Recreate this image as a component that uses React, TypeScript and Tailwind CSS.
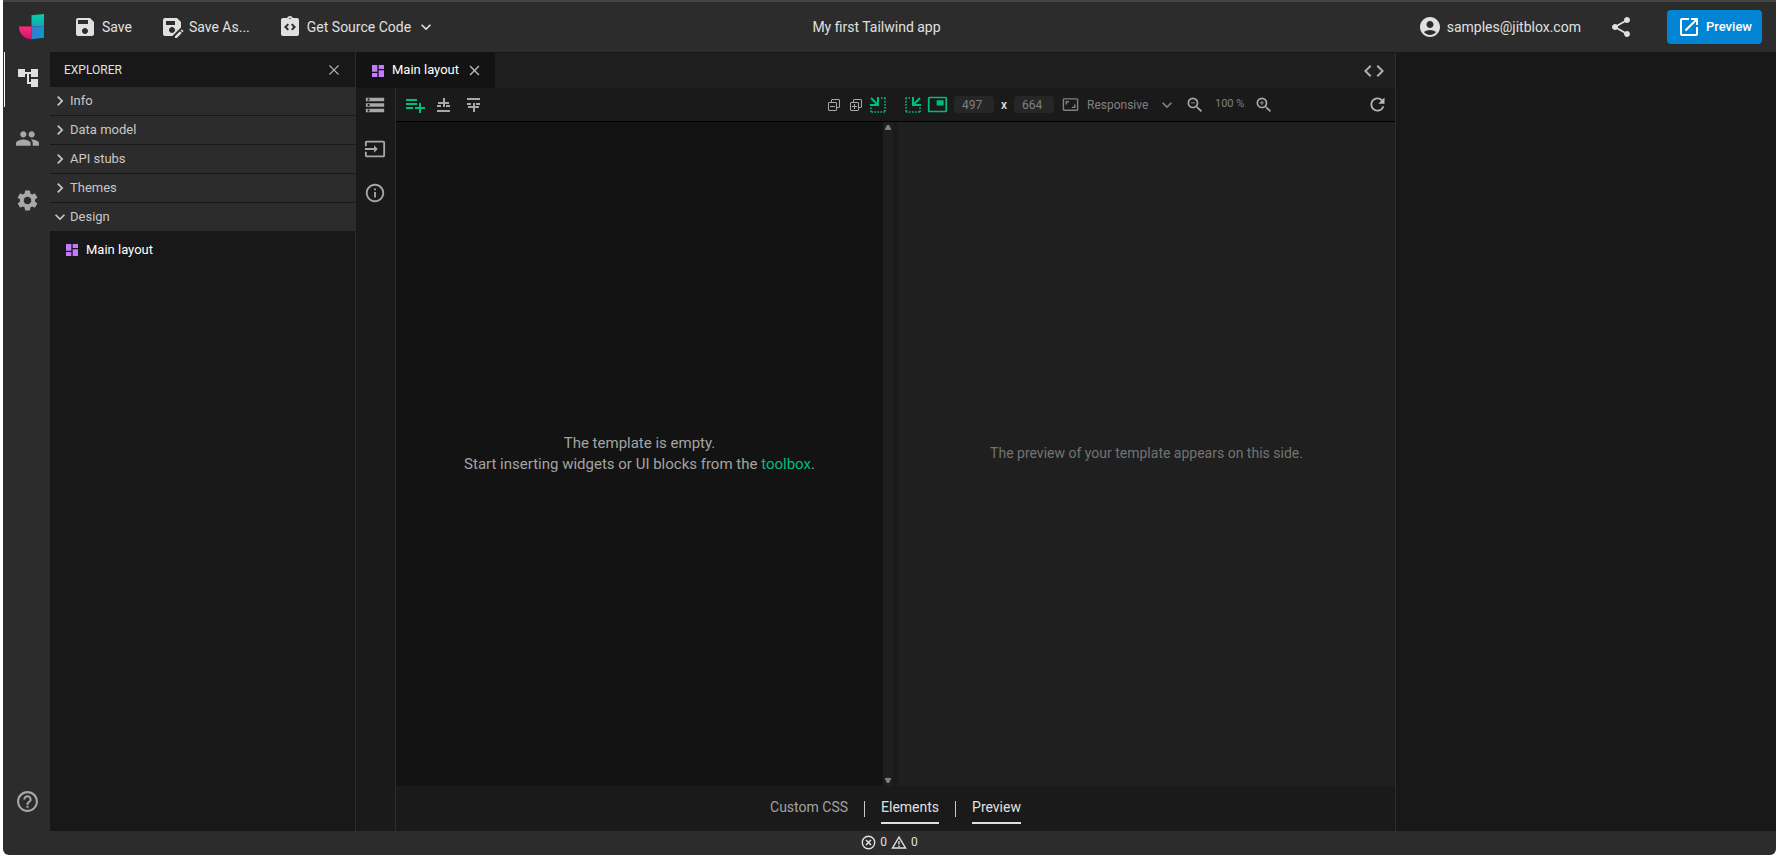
import React, { useState } from "react";
import {
  MdAccountCircle,
  MdAccountTree,
  MdAspectRatio,
  MdChevronRight,
  MdClose,
  MdCode,
  MdDashboard,
  MdExpandMore,
  MdHelpOutline,
  MdInfoOutline,
  MdInput,
  MdIntegrationInstructions,
  MdOpenInNew,
  MdPeople,
  MdPictureInPicture,
  MdPlaylistAdd,
  MdRefresh,
  MdSave,
  MdSaveAs,
  MdSettings,
  MdShare,
  MdStorage,
  MdZoomIn,
  MdZoomOut,
} from "react-icons/md";
import { VscClose, VscCollapseAll, VscExpandAll } from "react-icons/vsc";

const SECTIONS = ["Info", "Data model", "API stubs", "Themes", "Design"];

const Logo = () => (
  <svg width="26" height="26" viewBox="0 0 26 26" aria-hidden="true">
    <defs>
      <linearGradient id="pink" x1="0" y1="0" x2="0" y2="1">
        <stop offset="0" stopColor="#ff2a7f" />
        <stop offset="1" stopColor="#d3126a" />
      </linearGradient>
      <linearGradient id="teal" x1="0" y1="0" x2="0" y2="1">
        <stop offset="0" stopColor="#08cfa6" />
        <stop offset="1" stopColor="#12a5b8" />
      </linearGradient>
      <linearGradient id="blue" x1="0" y1="0" x2="1" y2="0.4">
        <stop offset="0" stopColor="#3f78c0" />
        <stop offset="1" stopColor="#0c98d6" />
      </linearGradient>
    </defs>
    <path d="M0 12.500h12.500V25.300C5 25 0 19.500 0 12.500z" fill="url(#pink)" />
    <path d="M12.500 1.300 25 0v12.500H12.500z" fill="url(#teal)" />
    <path d="M12.500 12.500H25V23.800l-12.500 1.500z" fill="url(#blue)" />
  </svg>
);

const InsertAboveIcon = ({ className = "" }: { className?: string }) => (
  <svg
    width="14"
    height="16"
    viewBox="0 0 14 16"
    fill="currentColor"
    className={className}
    aria-hidden="true"
  >
    <path d="M6 1h2v9H6zM1 5h11v2H1zM0 8h4v2H0zM9 8h4v2H9zM0 13h13v2H0z" />
  </svg>
);

const DockIcon = ({ className = "" }: { className?: string }) => (
  <svg
    width="16"
    height="16"
    viewBox="0 0 16 16"
    fill="none"
    stroke="currentColor"
    className={className}
    aria-hidden="true"
  >
    <path d="M1 1l7 7" strokeWidth="2" />
    <path d="M8 0v8M0 8h9" strokeWidth="2" />
    <path
      d="M11 1h4.500M15 1v14M15 15H0M1 15v-5"
      strokeWidth="1.600"
      strokeDasharray="1.600 1.400"
    />
  </svg>
);

const App = () => {
  const [openSection, setOpenSection] = useState("Design");
  const [width, setWidth] = useState("497");
  const [height, setHeight] = useState("664");

  return (
    <div className="flex min-h-screen bg-white pr-0.5 pb-0.5 pl-[3px] font-['Roboto',sans-serif] text-sm text-[#e0e0e0]">
      <div className="flex min-w-0 flex-1 flex-col overflow-hidden rounded-b-md bg-[#2c2c2c]">
        <header className="grid h-[52px] grid-cols-[1fr_auto_1fr] items-center border-t-2 border-[#454545] pr-3.5 pl-4">
          <div className="flex items-center gap-7">
            <Logo />
            <button type="button" className="flex items-center gap-[5px]">
              <MdSave size={24} />
              Save
            </button>
            <button type="button" className="flex items-center gap-[5px]">
              <MdSaveAs size={24} />
              Save As...
            </button>
            <button type="button" className="flex items-center gap-[5px]">
              <MdIntegrationInstructions size={24} />
              Get Source Code
              <MdExpandMore size={20} />
            </button>
          </div>
          <h1 className="mr-7">My first Tailwind app</h1>
          <div className="flex items-center justify-end">
            <button type="button" className="flex items-center gap-[5px]">
              <MdAccountCircle size={24} />
              samples@jitblox.com
            </button>
            <button type="button" aria-label="Share" className="mr-[34px] ml-7">
              <MdShare size={24} />
            </button>
            <button
              type="button"
              className="flex h-[34px] items-center gap-[5px] rounded bg-[#0284d4] px-2.5 text-[13px] font-medium text-white"
            >
              <MdOpenInNew size={24} />
              Preview
            </button>
          </div>
        </header>

        <div className="flex flex-1">
          <nav className="flex w-[47px] shrink-0 flex-col gap-[7px] pl-px text-[#a8a8a8]">
            <button
              type="button"
              aria-label="Explorer"
              className="flex h-[55px] items-center justify-center border-l border-white pb-1 text-[#e0e0e0]"
            >
              <MdAccountTree size={24} />
            </button>
            <button
              type="button"
              aria-label="Users"
              className="flex h-[55px] items-center justify-center pb-1.5"
            >
              <MdPeople size={25} />
            </button>
            <button
              type="button"
              aria-label="Settings"
              className="flex h-[55px] items-center justify-center pb-1.5"
            >
              <MdSettings size={25} />
            </button>
            <button
              type="button"
              aria-label="Help"
              className="mt-auto flex h-[55px] items-center justify-center pb-1"
            >
              <MdHelpOutline size={25} />
            </button>
          </nav>

          <aside className="w-[306px] shrink-0 border-r border-[#2c2c2c] bg-[#181818]">
            <div className="flex h-[35px] items-center justify-between pr-3 pl-3.5">
              <h2 className="text-xs">EXPLORER</h2>
              <button
                type="button"
                aria-label="Close explorer"
                className="text-[#b8b8b8]"
              >
                <VscClose size={18} />
              </button>
            </div>
            {SECTIONS.map((section) => (
              <button
                key={section}
                type="button"
                onClick={() => setOpenSection(section)}
                className="flex h-[29px] w-full items-center border-b border-[#181818] bg-[#2c2c2c] text-[13px] text-[#c8c8c8]"
              >
                {section === openSection ? (
                  <MdExpandMore size={20} />
                ) : (
                  <MdChevronRight size={20} />
                )}
                {section}
              </button>
            ))}
            <a
              href="#main-layout"
              className="flex h-9 items-center gap-1.5 pl-3.5 text-[13px] text-white"
            >
              <MdDashboard size={16} className="text-[#c27aff]" />
              Main layout
            </a>
          </aside>

          <main className="flex min-w-0 flex-1 flex-col bg-[#1a1a1a]">
            <div className="flex h-9 items-stretch justify-between border-t border-[#131313] bg-[#1f1f1f]">
              <div className="flex items-center bg-[#131313] pr-3 pl-3.5 text-[13px] text-white">
                <a href="#main-layout" className="flex items-center gap-1.5">
                  <MdDashboard size={16} className="text-[#c27aff]" />
                  Main layout
                </a>
                <button
                  type="button"
                  aria-label="Close tab"
                  className="ml-[7px] text-[#b8b8b8]"
                >
                  <MdClose size={17} />
                </button>
              </div>
              <button
                type="button"
                aria-label="View code"
                className="mr-[9px] text-[#b0b0b0]"
              >
                <MdCode size={24} />
              </button>
            </div>

            <div className="flex flex-1">
              <div className="flex w-10 shrink-0 flex-col items-center gap-[22px] border-r border-[#2c2c2c] pt-1.5 pr-0.5 text-[#a8a8a8]">
                <button type="button" aria-label="Template">
                  <MdStorage size={22} />
                </button>
                <button type="button" aria-label="Inputs">
                  <MdInput size={22} />
                </button>
                <button type="button" aria-label="Information">
                  <MdInfoOutline size={22} />
                </button>
              </div>

              <div className="flex min-w-0 flex-1 flex-col">
                <div className="flex h-[34px] items-center border-b border-black text-[#a8a8a8]">
                  <div className="flex flex-1 items-center pr-3 pl-[7px]">
                    <button
                      type="button"
                      aria-label="Add element"
                      className="text-[#00bc7d]"
                    >
                      <MdPlaylistAdd size={24} />
                    </button>
                    <button
                      type="button"
                      aria-label="Insert before"
                      className="ml-2.5"
                    >
                      <InsertAboveIcon />
                    </button>
                    <button
                      type="button"
                      aria-label="Insert after"
                      className="ml-4"
                    >
                      <InsertAboveIcon className="-scale-y-100" />
                    </button>
                    <div className="ml-auto flex items-center gap-1.5">
                      <button type="button" aria-label="Collapse all">
                        <VscCollapseAll size={16} />
                      </button>
                      <button type="button" aria-label="Expand all">
                        <VscExpandAll size={16} />
                      </button>
                      <button
                        type="button"
                        aria-label="Dock right"
                        className="text-[#00bc7d]"
                      >
                        <DockIcon />
                      </button>
                    </div>
                  </div>
                  <div className="flex flex-1 items-center pr-[7px] pl-[7px] text-xs text-[#808080]">
                    <button
                      type="button"
                      aria-label="Dock left"
                      className="text-[#00bc7d]"
                    >
                      <DockIcon className="-scale-x-100" />
                    </button>
                    <button
                      type="button"
                      aria-label="Floating preview"
                      className="ml-1.5 text-[#00bc7d]"
                    >
                      <MdPictureInPicture size={21} />
                    </button>
                    <input
                      type="text"
                      aria-label="Width"
                      value={width}
                      onChange={(e) => setWidth(e.target.value)}
                      className="ml-1.5 h-[17px] w-10 rounded bg-[#262626] px-2"
                    />
                    <span className="w-5 text-center font-medium text-[#e0e0e0]">
                      x
                    </span>
                    <input
                      type="text"
                      aria-label="Height"
                      value={height}
                      onChange={(e) => setHeight(e.target.value)}
                      className="h-[17px] w-10 rounded bg-[#262626] px-2"
                    />
                    <MdAspectRatio size={17} className="ml-2" />
                    <select
                      aria-label="Screen size"
                      className="ml-2 appearance-none"
                    >
                      <option>Responsive</option>
                    </select>
                    <MdExpandMore size={20} className="ml-2" />
                    <button
                      type="button"
                      aria-label="Zoom out"
                      className="ml-2 text-[#a8a8a8]"
                    >
                      <MdZoomOut size={20} />
                    </button>
                    <span className="mx-2.5 text-[11px]">100 %</span>
                    <button
                      type="button"
                      aria-label="Zoom in"
                      className="text-[#a8a8a8]"
                    >
                      <MdZoomIn size={20} />
                    </button>
                    <button
                      type="button"
                      aria-label="Refresh"
                      className="ml-auto text-[#b8b8b8]"
                    >
                      <MdRefresh size={21} />
                    </button>
                  </div>
                </div>

                <div className="flex flex-1">
                  <section className="flex flex-1 bg-[#131313]">
                    <p className="flex-1 self-center text-center text-[15px] leading-[21px] text-[#a3a3a3]">
                      The template is empty.
                      <br />
                      Start inserting widgets or UI blocks from the{" "}
                      <a href="#toolbox" className="text-[#00bc7d]">
                        toolbox
                      </a>
                      .
                    </p>
                    <div className="flex w-2.5 flex-col items-center justify-between bg-[#1f1f1f] py-[3px] text-[#808080]">
                      <svg width="6" height="5" viewBox="0 0 6 5" aria-hidden="true">
                        <path d="M0 5V4l2-4h2l2 4v1z" fill="currentColor" />
                      </svg>
                      <svg width="6" height="5" viewBox="0 0 6 5" aria-hidden="true">
                        <path d="M0 0v1l2 4h2l2-4V0z" fill="currentColor" />
                      </svg>
                    </div>
                  </section>
                  <div className="w-[5px] bg-[#1a1a1a]" />
                  <section className="flex flex-1 items-center justify-center bg-[#1f1f1f] pb-0.5">
                    <p className="text-[#737373]">
                      The preview of your template appears on this side.
                    </p>
                  </section>
                </div>

                <div className="flex h-[45px] items-center justify-center gap-4">
                  <button type="button" className="h-[31px] pb-1 text-[#a3a3a3]">
                    Custom CSS
                  </button>
                  <div className="h-4 w-px bg-[#c8c8c8]" />
                  <button
                    type="button"
                    className="h-[31px] border-b-2 border-[#e0e0e0] pb-0.5"
                  >
                    Elements
                  </button>
                  <div className="h-4 w-px bg-[#c8c8c8]" />
                  <button
                    type="button"
                    className="h-[31px] border-b-2 border-[#e0e0e0] pb-0.5"
                  >
                    Preview
                  </button>
                </div>
              </div>
            </div>
          </main>

          <aside className="w-[381px] shrink-0 border-l border-[#2c2c2c] bg-[#181818]" />
        </div>

        <footer className="flex h-6 items-center justify-center gap-1 pb-0.5 text-xs">
          <svg width="15" height="15" viewBox="0 0 15 15" fill="none" stroke="currentColor" aria-hidden="true">
            <circle cx="7.500" cy="7.500" r="6.200" strokeWidth="1.400" />
            <path d="M5 5l5 5M10 5l-5 5" strokeWidth="1.600" />
          </svg>
          <span>0</span>
          <svg width="16" height="15" viewBox="0 0 16 15" fill="none" stroke="currentColor" aria-hidden="true">
            <path d="M8 2.200 14.500 13h-13z" strokeWidth="1.400" />
            <path d="M8 6v3.500M8 10.500V12" strokeWidth="1.400" />
          </svg>
          <span>0</span>
        </footer>
      </div>
    </div>
  );
};

export default App;
